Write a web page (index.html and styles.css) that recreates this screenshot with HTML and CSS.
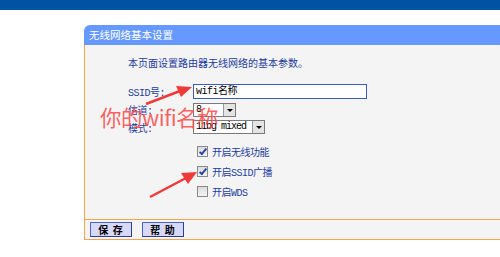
FILE: index.html
```html
<!DOCTYPE html>
<html lang="zh-CN">
<head>
    <meta charset="UTF-8">
    <title>无线网络基本设置</title>
    <link rel="stylesheet" href="styles.css">
</head>
<body>
    <div class="topbar"></div>

    <div class="panel">
        <div class="panel-head">无线网络基本设置</div>
        <div class="panel-body">
            <p class="intro">本页面设置路由器无线网络的基本参数。</p>

            <div class="row">
                <span class="label">SSID号:</span>
                <div class="textbox">wifi名称</div>
            </div>
            <div class="row row-channel">
                <span class="label">信道:</span>
                <div class="select sel-channel"><span class="sel-val">8</span><span class="sel-btn"></span></div>
            </div>
            <div class="row row-mode">
                <span class="label">模式:</span>
                <div class="select sel-mode"><span class="sel-val">11bg mixed</span><span class="sel-btn"></span></div>
            </div>

            <div class="checks">
                <div class="check"><span class="box on"></span>开启无线功能</div>
                <div class="check"><span class="box on"></span>开启SSID广播</div>
                <div class="check"><span class="box"></span>开启WDS</div>
            </div>
        </div>
        <div class="panel-foot">
            <button class="btn">保 存</button>
            <button class="btn">帮 助</button>
        </div>
    </div>

    <!-- annotations drawn over the screenshot -->
    <div class="note">你的wifi名称</div>
    <svg class="arrows" width="500" height="257" viewBox="0 0 500 257">
        <g fill="#f03a3a" stroke="#f03a3a">
            <line x1="146" y1="104" x2="180" y2="91" stroke-width="2.5"/>
            <polygon points="192,87 176,86 181,97" stroke="none"/>
            <line x1="150" y1="197" x2="186" y2="178" stroke-width="2.5"/>
            <polygon points="197,172 181,173 188,184" stroke="none"/>
        </g>
    </svg>
</body>
</html>
```

FILE: styles.css
```css
body {
    margin: 0;
    width: 500px;
    height: 257px;
    overflow: hidden;
    position: relative;
    background: #fff;
    font-family: "Noto Sans CJK SC", sans-serif;
    font-size: 10px;
    color: #1e3c9c;
}

.topbar {
    height: 10px;
    background: #0052a3;
}

.panel {
    margin: 15px 0 0 84px;
    width: 440px;
}

.panel-head {
    height: 20px;
    line-height: 20px;
    padding-left: 5px;
    background: #6699ff;
    color: #fff;
    font-size: 10.5px;
    border-top-left-radius: 6px;
}

.panel-body {
    background: #f4f4f4;
    border-left: 1px solid #f7a54a;
    padding: 11px 0 16px 43px;
    height: 147px;
}

.intro {
    margin: 0 0 14px;
    line-height: 14px;
    font-size: 10px;
}

.row {
    display: flex;
    align-items: center;
    height: 15px;
    margin-bottom: 3px;
}

.row-mode {
    margin-top: 1px;
    height: 14px;
}

.label {
    width: 65px;
    font-family: "Liberation Mono", "Noto Sans CJK SC", monospace;
    letter-spacing: -0.5px;
}

.textbox {
    width: 168px;
    height: 11px;
    line-height: 11px;
    padding: 1px 2px;
    background: #fff;
    border: 1px solid #3b5bc8;
    color: #000;
    font-family: "Liberation Mono", "Noto Sans CJK SC", monospace;
    letter-spacing: -0.5px;
}

.select {
    display: flex;
    height: 12px;
    background: #fff;
    border: 1px solid #7a7a7a;
    color: #000;
    font-family: "Liberation Mono", monospace;
}

.sel-channel {
    width: 41px;
}

.sel-mode {
    width: 70px;
}

.sel-val {
    flex: 1;
    line-height: 12px;
    padding-left: 2px;
    letter-spacing: -1px;
}

.sel-btn {
    width: 11px;
    background: #e4e4e4;
    border-left: 1px solid #999;
    position: relative;
}

.sel-btn::after {
    content: "";
    position: absolute;
    left: 3px;
    top: 5px;
    border-left: 3px solid transparent;
    border-right: 3px solid transparent;
    border-top: 3px solid #000;
}

.checks {
    margin: 7px 0 0 69px;
}

.check {
    display: flex;
    align-items: center;
    height: 20px;
    font-family: "Liberation Mono", "Noto Sans CJK SC", monospace;
    letter-spacing: -0.5px;
}

.box {
    width: 9px;
    height: 9px;
    margin-right: 4px;
    border: 1px solid #8a8a8a;
    background: linear-gradient(#dcdcdc, #f4f4f4);
    position: relative;
}

.box.on::after {
    content: "";
    position: absolute;
    left: 3px;
    top: 0;
    width: 2px;
    height: 6px;
    border-right: 2px solid #2b47a8;
    border-bottom: 2px solid #2b47a8;
    transform: rotate(40deg);
}

.panel-foot {
    height: 21px;
    background: #f4f4f4;
    border-top: 1px solid #f7a54a;
    border-bottom: 1px solid #f7a54a;
    border-left: 1px solid #f7a54a;
    padding: 2px 0 0 5px;
    box-sizing: border-box;
    display: flex;
    align-items: flex-start;
    gap: 10px;
}

.btn {
    width: 42px;
    height: 15px;
    padding: 0;
    background: #d8d8fa;
    border: 1px solid #4a66c4;
    border-right-color: #2b3f8a;
    border-bottom-color: #2b3f8a;
    color: #000;
    font-family: "Noto Sans CJK SC", sans-serif;
    font-size: 10px;
    font-weight: bold;
    letter-spacing: 1px;
    line-height: 12px;
}

.note {
    position: absolute;
    left: 100px;
    top: 103px;
    font-size: 21.5px;
    line-height: 28px;
    color: rgba(255, 70, 70, 0.85);
    font-family: "Noto Sans CJK SC", sans-serif;
    letter-spacing: -0.5px;
}

.arrows {
    position: absolute;
    left: 0;
    top: 0;
}
```
